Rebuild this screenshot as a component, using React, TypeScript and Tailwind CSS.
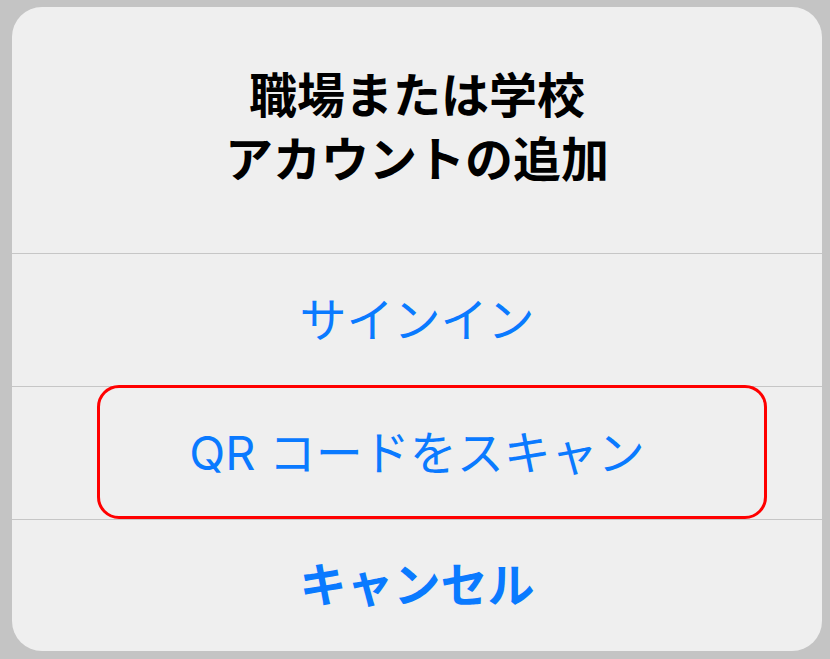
import React from 'react';

const font = { fontFamily: 'Inter, "Noto Sans CJK JP", "Noto Sans", sans-serif' };

const App: React.FC = () => {
    return (
        <div className="w-[830px] h-[659px] bg-[#c4c4c4] pt-[7px] pl-[12px]" style={font}>
            <div className="relative w-[810px] h-[644px] bg-[#efefef] rounded-[30px] flex flex-col overflow-hidden">
                <div className="h-[246px] flex flex-col items-center justify-center text-black font-bold text-[48px] leading-[64px] pb-[4px]">
                    <div>職場または学校</div>
                    <div>アカウントの追加</div>
                </div>
                <div className="h-px bg-[#c6c6c6]" />
                <div className="h-[132px] flex items-center justify-center text-[#0a7aff] text-[47px]">
                    サインイン
                </div>
                <div className="h-px bg-[#c6c6c6]" />
                <div className="h-[132px] flex items-center justify-center text-[#0a7aff] text-[47px]">
                    QR コードをスキャン
                </div>
                <div className="h-px bg-[#c6c6c6]" />
                <div className="flex-1 flex items-center justify-center text-[#0a7aff] text-[47px] font-bold">
                    キャンセル
                </div>
                {/* highlight around the QR option */}
                <div className="absolute left-[85px] top-[378px] w-[670px] h-[134px] border-[3px] border-[#ff0000] rounded-[22px]" />
            </div>
        </div>
    );
};

export default App;
